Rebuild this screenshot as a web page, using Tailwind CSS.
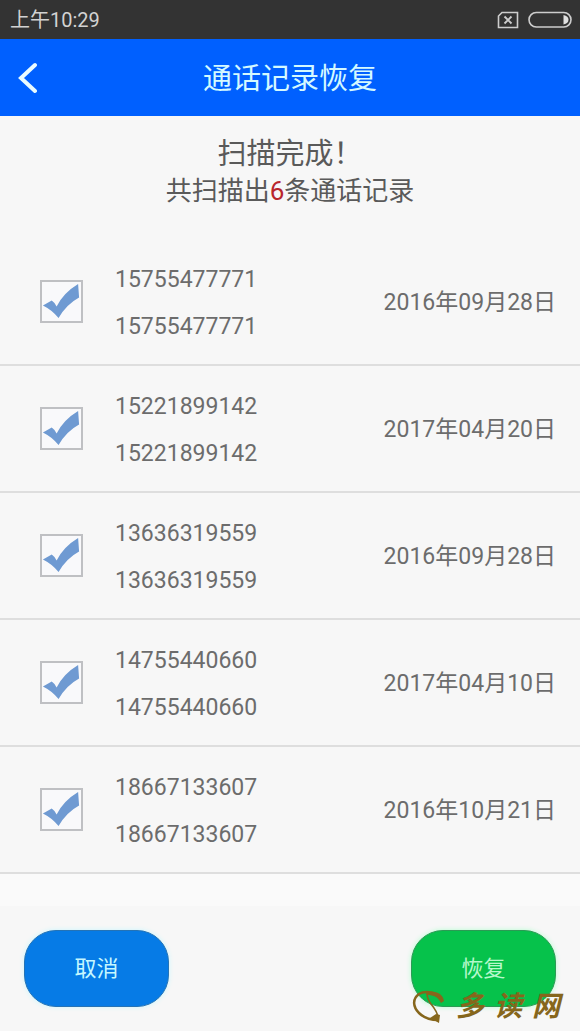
<!DOCTYPE html>
<html lang="zh-CN">
<head>
<meta charset="utf-8">
<meta name="viewport" content="width=device-width, initial-scale=1">
<title>通话记录恢复</title>
<script src="https://cdn.jsdelivr.net/npm/@tailwindcss/browser@4"></script>
</head>
<body class="flex min-h-screen flex-col bg-[#f7f7f7] font-['Roboto','Noto_Sans_CJK_SC',sans-serif] text-[#6c6c6c]">
<svg class="hidden" aria-hidden="true">
  <symbol id="tick" viewBox="0 0 44 44"><path d="M3 26 L12 21 Q15 23 17 27 Q24 13 39 4 L40 18 Q27 25 19 39 Q13 31 3 26Z" fill="#6f9ad2"/></symbol>
</svg>

<div class="flex h-[39px] items-center justify-between bg-[#333333] pt-px pr-2 pl-[10px] text-[#d2d2d2]">
  <span class="text-[20px] leading-6">上午10:29</span>
  <div class="flex items-center gap-[9px]">
    <svg class="h-[18px] w-[22px]" viewBox="0 0 22 18" fill="none" stroke="#cdcdcd" stroke-width="1.6" aria-hidden="true"><path d="M5 1.500H20.500V16.500H1.500V5Z"/><path d="M7.500 5.500L14.500 12.500M14.500 5.500L7.500 12.500" stroke-width="1.900"/></svg>
    <svg class="h-[18px] w-[44px]" viewBox="0 0 44 18" fill="none" aria-hidden="true"><rect x="1" y="1.500" width="42" height="14.500" rx="7.250" stroke="#cdcdcd" stroke-width="1.600"/><path d="M35.500 4Q40.500 5 40.500 8.750Q40.500 12.500 35.500 13.500Z" fill="#e0e0e0"/></svg>
  </div>
</div>

<header class="grid h-[77px] grid-cols-[56px_1fr_56px] items-center bg-[#0060ff]">
  <button type="button" aria-label="返回" class="flex h-full items-center pl-[17px]">
    <svg class="h-8 w-5" viewBox="0 0 20 32" fill="none" stroke="#e9fbff" stroke-width="4" stroke-linecap="round" aria-hidden="true"><path d="M18 3L4 16L18 29"/></svg>
  </button>
  <h1 class="pt-0.5 text-center text-[29px] leading-10 text-[#d4f9ff]">通话记录恢复</h1>
</header>

<section class="pt-[18px] text-center text-[#5a5a5a]">
  <p class="text-[29px] leading-10">扫描完成！</p>
  <p class="text-[26px] leading-[34px]">共扫描出<span class="text-[#b8262c]">6</span>条通话记录</p>
</section>

<ul class="mt-[31px] text-[23px]">
  <li class="border-b-2 border-[#dedede]">
    <label class="flex h-[125px] items-center pr-6 pl-10">
      <span class="relative h-[43px] w-[43px] shrink-0"><input type="checkbox" checked class="peer block size-full appearance-none border-2 border-[#bfc0c3] bg-[#f9f9fb]"><svg class="pointer-events-none absolute inset-0 hidden size-full peer-checked:block" aria-hidden="true"><use href="#tick"/></svg></span>
      <span class="ml-8 flex-1 pt-[3px] leading-[47px]"><span class="block">15755477771</span><span class="block">15755477771</span></span>
      <time class="pt-1">2016年09月28日</time>
    </label>
  </li>
  <li class="border-b-2 border-[#dedede]">
    <label class="flex h-[125px] items-center pr-6 pl-10">
      <span class="relative h-[43px] w-[43px] shrink-0"><input type="checkbox" checked class="peer block size-full appearance-none border-2 border-[#bfc0c3] bg-[#f9f9fb]"><svg class="pointer-events-none absolute inset-0 hidden size-full peer-checked:block" aria-hidden="true"><use href="#tick"/></svg></span>
      <span class="ml-8 flex-1 pt-[3px] leading-[47px]"><span class="block">15221899142</span><span class="block">15221899142</span></span>
      <time class="pt-1">2017年04月20日</time>
    </label>
  </li>
  <li class="border-b-2 border-[#dedede]">
    <label class="flex h-[125px] items-center pr-6 pl-10">
      <span class="relative h-[43px] w-[43px] shrink-0"><input type="checkbox" checked class="peer block size-full appearance-none border-2 border-[#bfc0c3] bg-[#f9f9fb]"><svg class="pointer-events-none absolute inset-0 hidden size-full peer-checked:block" aria-hidden="true"><use href="#tick"/></svg></span>
      <span class="ml-8 flex-1 pt-[3px] leading-[47px]"><span class="block">13636319559</span><span class="block">13636319559</span></span>
      <time class="pt-1">2016年09月28日</time>
    </label>
  </li>
  <li class="border-b-2 border-[#dedede]">
    <label class="flex h-[125px] items-center pr-6 pl-10">
      <span class="relative h-[43px] w-[43px] shrink-0"><input type="checkbox" checked class="peer block size-full appearance-none border-2 border-[#bfc0c3] bg-[#f9f9fb]"><svg class="pointer-events-none absolute inset-0 hidden size-full peer-checked:block" aria-hidden="true"><use href="#tick"/></svg></span>
      <span class="ml-8 flex-1 pt-[3px] leading-[47px]"><span class="block">14755440660</span><span class="block">14755440660</span></span>
      <time class="pt-1">2017年04月10日</time>
    </label>
  </li>
  <li class="border-b-2 border-[#dedede]">
    <label class="flex h-[125px] items-center pr-6 pl-10">
      <span class="relative h-[43px] w-[43px] shrink-0"><input type="checkbox" checked class="peer block size-full appearance-none border-2 border-[#bfc0c3] bg-[#f9f9fb]"><svg class="pointer-events-none absolute inset-0 hidden size-full peer-checked:block" aria-hidden="true"><use href="#tick"/></svg></span>
      <span class="ml-8 flex-1 pt-[3px] leading-[47px]"><span class="block">18667133607</span><span class="block">18667133607</span></span>
      <time class="pt-1">2016年10月21日</time>
    </label>
  </li>
</ul>
<div class="h-8 bg-[#fafafa]"></div>

<footer class="relative flex flex-1 justify-between px-6 pt-6 pb-6 text-[22px]">
  <button type="button" class="h-[77px] w-[145px] rounded-[32px] border border-[#2573b5] bg-[#067be6] text-[#c5f7ff] shadow-[0_0_5px_#c8f6ff]">取消</button>
  <button type="button" class="h-[77px] w-[145px] rounded-[32px] border border-[#2c9a55] bg-[#06c24b] text-[#b5f8cb] shadow-[0_0_5px_#b4ffd0]">恢复</button>
  <div class="pointer-events-none absolute right-5 bottom-1.5 flex items-center text-[#86661c]">
    <svg class="mr-3 h-9 w-8" viewBox="0 0 32 36" fill="none" stroke="#86661c" aria-hidden="true"><path d="M30 12C28 3 13 1 7 5C0 10 1 18 7 24C12 29 19 31 26 31" stroke-width="2.500"/><path d="M26 32C27 27 24 21 19 15C16 11 15 8 15 4" stroke-width="1.600"/><path d="M14 3C24 1 31 5 32 12L29 14C26 8 22 6 15 6ZM18 29L24 25L28 26L27 34Z" fill="#86661c" stroke="none"/></svg>
    <span class="flex gap-2.5 text-[28px] leading-9 font-bold italic"><span>多</span><span>读</span><span>网</span></span>
  </div>
</footer>
</body>
</html>
